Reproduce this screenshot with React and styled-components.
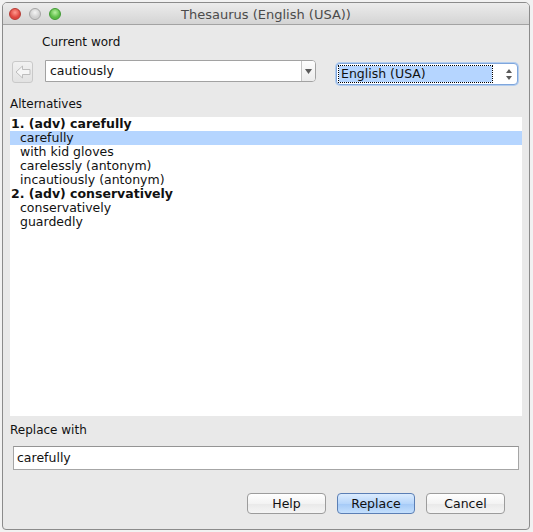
import React from "react";
import styled, { createGlobalStyle } from "styled-components";

const GlobalStyle = createGlobalStyle`
  html, body {
    margin: 0;
    padding: 0;
    background: #f2f2f2;
  }
  body {
    padding: 2px;
    font-family: "DejaVu Sans", "Liberation Sans", sans-serif;
    font-size: 12px;
    color: #111;
  }
`;

const Window = styled.div`
  width: 526px;
  height: 526px;
  border: 1px solid #8b8b8b;
  border-radius: 5px 5px 4px 4px;
  background: #e9e9e9;
  display: flex;
  flex-direction: column;
  overflow: hidden;
`;

const TitleBar = styled.div`
  height: 21px;
  flex: none;
  display: flex;
  align-items: center;
  position: relative;
  background: linear-gradient(#ececec, #d4d4d4);
  border-bottom: 1px solid #a3a3a3;
`;

const Lights = styled.div`
  display: flex;
  gap: 8px;
  padding-left: 6px;
  padding-top: 1px;
`;

const Light = styled.span`
  width: 12px;
  height: 12px;
  border-radius: 50%;
  box-sizing: border-box;
  border: 1px solid ${(p) => p.$edge};
  background: radial-gradient(circle at 50% 35%, ${(p) => p.$hi} 0%, ${(p) => p.$color} 60%);
`;

const Title = styled.div`
  position: absolute;
  left: 0;
  right: 0;
  text-align: center;
  font-size: 13px;
  color: #4b4b4b;
  padding-top: 1px;
`;

const Body = styled.div`
  flex: 1;
  display: flex;
  flex-direction: column;
`;

const Label = styled.div`
  line-height: 16px;
  height: 16px;
  margin-top: ${(p) => p.$top}px;
  padding-left: ${(p) => p.$left}px;
`;

const WordRow = styled.div`
  display: flex;
  align-items: flex-start;
  height: 25px;
  margin-top: 10px;
  padding-left: 9px;
`;

const BackButton = styled.div`
  width: 21px;
  height: 22px;
  margin-top: 1px;
  box-sizing: border-box;
  border: 1px solid #c9c9c9;
  border-radius: 3px;
  background: linear-gradient(#f1f1f1, #e2e2e2);
  display: flex;
  align-items: center;
  justify-content: center;
`;

const Combo = styled.div`
  width: 271px;
  height: 22px;
  margin-left: 12px;
  box-sizing: border-box;
  display: flex;
  border: 1px solid #a2a2a2;
  border-radius: 0 4px 4px 0;
  background: #fff;
`;

const ComboText = styled.div`
  flex: 1;
  line-height: 19px;
  padding-left: 4px;
  font-size: 12.5px;
`;

const ComboArrow = styled.div`
  width: 13px;
  border-left: 1px solid #c4c4c4;
  border-radius: 0 3px 3px 0;
  background: linear-gradient(#fdfdfd, #ececec);
  display: flex;
  align-items: center;
  justify-content: center;
`;

const Select = styled.div`
  width: 182px;
  height: 22px;
  margin-left: 20px;
  margin-top: 3px;
  box-sizing: border-box;
  border: 1px solid #7fa6dc;
  box-shadow: 0 0 0 1px #b3cdee;
  border-radius: 4px;
  background: #fff;
  display: flex;
  align-items: center;
  padding: 1px;
`;

const SelectValue = styled.div`
  width: 151px;
  height: 16px;
  line-height: 16px;
  margin-left: 1px;
  background: #b5d5ff;
  outline: 1px dotted #000;
  font-size: 12.5px;
  padding-left: 2px;
`;

const Stepper = styled.svg`
  margin-left: auto;
  margin-right: 4px;
`;

const ListBox = styled.div`
  width: 512px;
  height: 299px;
  margin-top: 5px;
  margin-left: 7px;
  background: #fff;
  box-sizing: border-box;
  font-size: 12.5px;
`;

const Row = styled.div`
  height: 14px;
  line-height: 14px;
  padding-left: ${(p) => (p.$head ? 1 : 10)}px;
  font-weight: ${(p) => (p.$head ? "bold" : "normal")};
  background: ${(p) => (p.$selected ? "#b5d5ff" : "transparent")};
`;

const ReplaceInput = styled.div`
  width: 506px;
  height: 24px;
  margin-top: 8px;
  margin-left: 10px;
  box-sizing: border-box;
  border: 1px solid #a6a6a6;
  border-top-color: #949494;
  background: #fff;
  line-height: 21px;
  padding-left: 3px;
  font-size: 12.5px;
`;

const ButtonRow = styled.div`
  display: flex;
  justify-content: flex-end;
  gap: 11px;
  margin-top: 23px;
  padding-right: 24px;
`;

const Button = styled.div`
  width: ${(p) => p.$w}px;
  height: 21px;
  box-sizing: border-box;
  border: 1px solid ${(p) => (p.$primary ? "#5b7fb5" : "#9c9c9c")};
  border-radius: 4px;
  background: ${(p) =>
    p.$primary
      ? "linear-gradient(#dcecfe, #b7d6fb 50%, #a4c9f7 51%, #c4e0fd)"
      : "linear-gradient(#ffffff, #f3f3f3 50%, #e9e9e9 51%, #f5f5f5)"};
  display: flex;
  align-items: center;
  justify-content: center;
  font-size: 12.5px;
  color: #111;
`;

const entries = [
  { text: "1. (adv) carefully", head: true },
  { text: "carefully", selected: true },
  { text: "with kid gloves" },
  { text: "carelessly (antonym)" },
  { text: "incautiously (antonym)" },
  { text: "2. (adv) conservatively", head: true },
  { text: "conservatively" },
  { text: "guardedly" },
];

export default function App() {
  return (
    <>
      <GlobalStyle />
      <Window>
        <TitleBar>
          <Lights>
            <Light $color="#e0463f" $hi="#ff9a8e" $edge="#b53a33" />
            <Light $color="#cfcfcf" $hi="#f4f4f4" $edge="#a5a5a5" />
            <Light $color="#5cbc46" $hi="#b8f0a0" $edge="#3f9a32" />
          </Lights>
          <Title>Thesaurus (English (USA))</Title>
        </TitleBar>
        <Body>
          <Label $top={9} $left={39}>Current word</Label>
          <WordRow>
            <BackButton>
              <svg width="16" height="14" viewBox="0 0 16 14">
                <path
                  d="M1 7 L7.5 1 L7.5 4.5 L15 4.5 L15 9.5 L7.5 9.5 L7.5 13 Z"
                  fill="#f6f6f6"
                  stroke="#bdbdbd"
                  strokeWidth="1"
                  strokeLinejoin="round"
                />
              </svg>
            </BackButton>
            <Combo>
              <ComboText>cautiously</ComboText>
              <ComboArrow>
                <svg width="7" height="5" viewBox="0 0 7 5">
                  <path d="M0 0 L7 0 L3.5 5 Z" fill="#5a5a5a" />
                </svg>
              </ComboArrow>
            </Combo>
            <Select>
              <SelectValue>English (USA)</SelectValue>
              <Stepper width="6" height="11" viewBox="0 0 6 11">
                <path d="M3 0 L6 4 L0 4 Z" fill="#5a5a5a" />
                <path d="M0 7 L6 7 L3 11 Z" fill="#5a5a5a" />
              </Stepper>
            </Select>
          </WordRow>
          <Label $top={11} $left={7}>Alternatives</Label>
          <ListBox>
            {entries.map((e) => (
              <Row key={e.text + (e.head ? "h" : "")} $head={e.head} $selected={e.selected}>
                {e.text}
              </Row>
            ))}
          </ListBox>
          <Label $top={6} $left={7}>Replace with</Label>
          <ReplaceInput>carefully</ReplaceInput>
          <ButtonRow>
            <Button $w={79}>Help</Button>
            <Button $w={78} $primary>Replace</Button>
            <Button $w={79}>Cancel</Button>
          </ButtonRow>
        </Body>
      </Window>
    </>
  );
}
